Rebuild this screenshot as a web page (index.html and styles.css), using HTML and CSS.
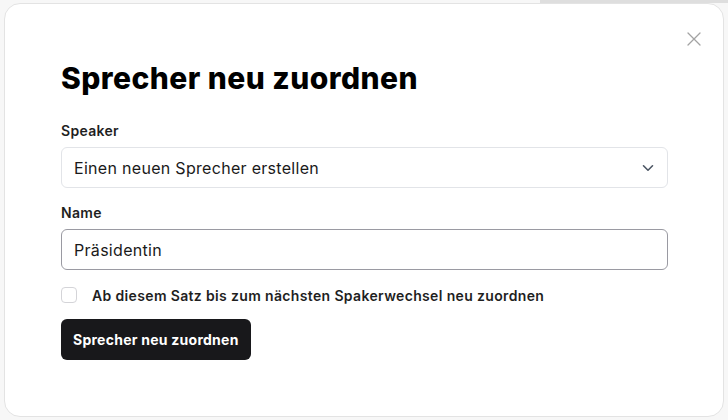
FILE: index.html
```html
<!DOCTYPE html>
<html lang="de">
<head>
<meta charset="utf-8">
<link rel="stylesheet" href="styles.css">
</head>
<body>
<div class="backdrop">
  <div class="modal">
    <button class="close" aria-label="Schließen">
      <svg width="14" height="14" viewBox="0 0 14 14"><path d="M1 1L13 13M13 1L1 13" stroke="#a3a3a3" stroke-width="1.3" fill="none" stroke-linecap="round"/></svg>
    </button>
    <h1 class="title">Sprecher neu zuordnen</h1>
    <label class="label first">Speaker</label>
    <div class="select">
      <span>Einen neuen Sprecher erstellen</span>
      <svg width="12" height="8" viewBox="0 0 12 8"><path d="M1.5 1.8L6 6.2L10.5 1.8" stroke="#4b5563" stroke-width="1.6" fill="none" stroke-linecap="round" stroke-linejoin="round"/></svg>
    </div>
    <label class="label">Name</label>
    <div class="input">Präsidentin</div>
    <div class="check-row">
      <span class="checkbox"></span>
      <span class="check-label">Ab diesem Satz bis zum nächsten Spakerwechsel neu zuordnen</span>
    </div>
    <button class="submit">Sprecher neu zuordnen</button>
  </div>
</div>
</body>
</html>
```
FILE: styles.css
```css
* { box-sizing: border-box; }
html, body { margin: 0; padding: 0; }
body {
  width: 728px;
  height: 420px;
  overflow: hidden;
  background: #f6f6f6;
  font-family: Inter, "Open Sans", "Liberation Sans", sans-serif;
  color: #111;
}
.backdrop {
  position: relative;
  width: 728px;
  height: 420px;
  padding: 3px 4px 3px 4px;
  background: linear-gradient(to right, #f7f7f7 0, #f7f7f7 540px, #dedede 540px, #dedede 728px) top / 100% 3px no-repeat, #f7f7f7;
  border-left: 0;
}
.modal {
  position: relative;
  width: 720px;
  height: 414px;
  background: #fff;
  border: 1px solid #e3e3e3;
  border-radius: 16px;
  padding: 54px 55px 0 56px;
  display: flex;
  flex-direction: column;
  align-items: stretch;
}
.close {
  position: absolute;
  top: 28px;
  right: 22px;
  border: 0;
  background: none;
  padding: 0;
  width: 14px;
  height: 14px;
  display: flex;
}
.title {
  margin: 0;
  font-size: 30px;
  line-height: 40px;
  font-weight: 800;
  letter-spacing: 0.45px;
  color: #000;
}
.label {
  display: block;
  font-size: 14px;
  line-height: 20px;
  font-weight: 600;
  color: #1f1f1f;
  margin-top: 15px;
  letter-spacing: 0.3px;
}
.label.first { margin-top: 23px; }
.select, .input {
  margin-top: 6px;
  height: 41px;
  border-radius: 6px;
  display: flex;
  align-items: center;
  padding: 0 13px 0 12px;
  font-size: 16px;
  letter-spacing: 0.3px;
  color: #1a1a1a;
}
.select {
  border: 1px solid #e2e4e8;
  justify-content: space-between;
}
.input {
  border: 1px solid #9a9aa2;
}
.check-row {
  margin-top: 15px;
  height: 20px;
  display: flex;
  align-items: center;
  gap: 15px;
}
.checkbox {
  width: 16px;
  height: 16px;
  border: 1px solid #d4d4d8;
  border-radius: 4px;
  background: #fff;
}
.check-label {
  font-size: 14px;
  font-weight: 600;
  letter-spacing: 0.35px;
  color: #1f1f1f;
}
.submit {
  margin-top: 14px;
  align-self: flex-start;
  height: 41px;
  padding: 0 12px;
  border: 0;
  border-radius: 6px;
  background: #18181b;
  color: #fff;
  font-family: inherit;
  font-size: 14px;
  font-weight: 700;
  letter-spacing: 0.25px;
}
```
